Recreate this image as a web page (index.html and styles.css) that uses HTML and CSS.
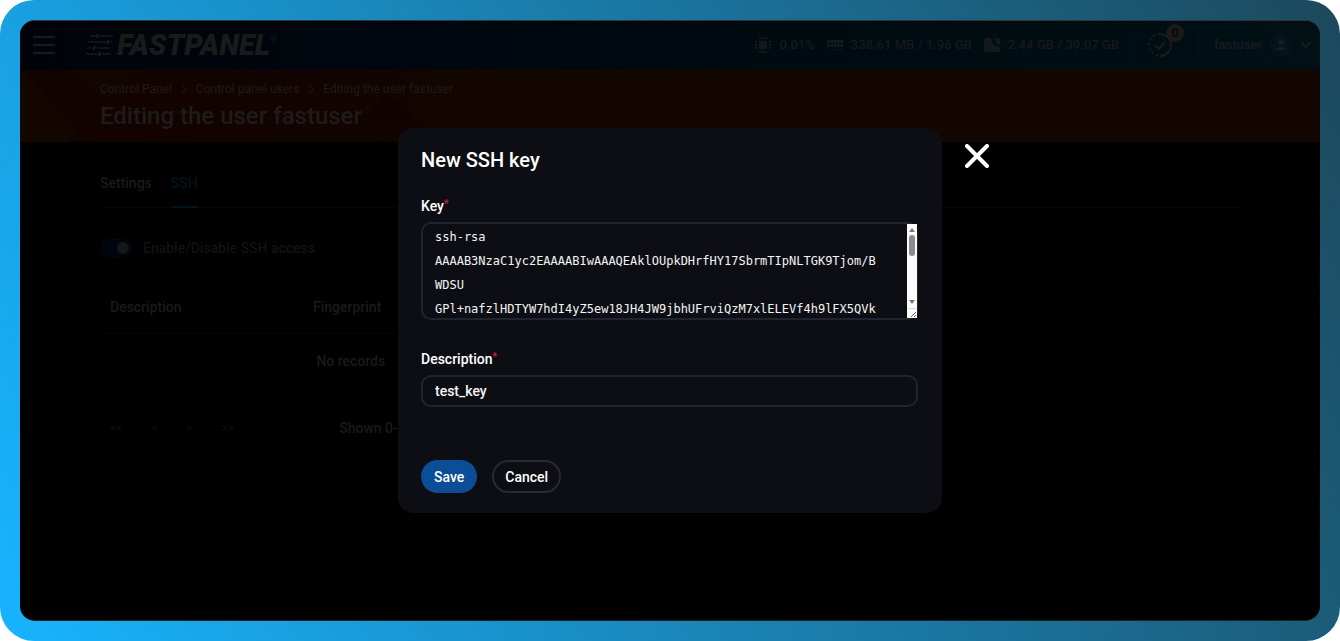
FILE: index.html
```html
<!DOCTYPE html>
<html lang="en">
<head>
<meta charset="utf-8">
<title>Editing the user fastuser</title>
<link rel="stylesheet" href="styles.css">
</head>
<body>
<div class="frame">
  <div class="app">
    <header class="topbar">
      <button class="menu" aria-label="Menu"><span></span><span></span><span></span></button>
      <a class="logo" href="#">
        <svg width="28" height="22" viewBox="0 0 28 22" fill="none" stroke="currentColor" stroke-width="1.6"><path d="M4 2h6M14 2h13M2 8h18M24 8h2M1 14h4M11 14h13M0 20h11M16 20h8"/><path stroke-width="2.500" d="M12 0l-1 4M22.500 6l-1 4M8.500 12l-1 4M14 18l-1 4"/></svg>
        <span class="brand">FASTPANEL</span><span class="reg">®</span>
      </a>
      <div class="stats">
        <span class="stat">
          <svg width="18" height="18" viewBox="0 0 18 18" fill="currentColor"><rect x="5" y="5" width="8" height="8" rx="1"/><path d="M5 1h2v2H5zM8 1h2v2H8zM11 1h2v2h-2zM5 15h2v2H5zM8 15h2v2H8zM11 15h2v2h-2zM1 5h2v2H1zM1 8h2v2H1zM1 11h2v2H1zM15 5h2v2h-2zM15 8h2v2h-2zM15 11h2v2h-2z"/></svg>
          0.01%</span>
        <span class="stat">
          <svg width="18" height="18" viewBox="0 0 18 18" fill="currentColor"><path fill-rule="evenodd" d="M2 4h14a1 1 0 0 1 1 1v6H1V5a1 1 0 0 1 1-1zM3 6v3h2V6zM7 6v3h1V6zM10 6v3h1V6zM13 6v3h2V6zM2 13h2v1H2zM6 13h2v1H6zM10 13h2v1h-2zM14 13h2v1h-2z"/></svg>
          338.61 MB / 1.96 GB</span>
        <span class="stat">
          <svg width="18" height="18" viewBox="0 0 18 18" fill="currentColor"><path fill-rule="evenodd" d="M3 2h5c0 5 3 8 9 9v3a2 2 0 0 1-2 2H3a2 2 0 0 1-2-2V4a2 2 0 0 1 2-2zM3 4v1h1V4zM3 12v1h1v-1zM14 13v1h1v-1z"/><path d="M10 2h5a2 2 0 0 1 2 2v5c-2 0-4-1-5-3l2-1-1-2-2 1z"/></svg>
          2.44 GB / 39.07 GB</span>
      </div>
      <button class="tasks" aria-label="Tasks">
        <svg width="24" height="26" viewBox="0 0 24 26" fill="none" stroke="currentColor" stroke-width="2"><path d="M12 2a11 11 0 0 1 0 22"/><path d="M12 2a11 11 0 0 0 0 22" stroke-dasharray="2 3"/><path d="M7 13l4 4 6-7"/></svg>
        <span class="badge">0</span>
      </button>
      <button class="account">fastuser
        <svg width="24" height="24" viewBox="0 0 24 24"><circle class="disc" cx="12" cy="12" r="12"/><circle cx="12" cy="9" r="3" fill="currentColor"/><path d="M6 17c0-4 12-4 12 0z" fill="currentColor"/></svg>
        <svg width="12" height="8" viewBox="0 0 12 8" fill="none" stroke="currentColor" stroke-width="2"><path d="M1 1l5 5 5-5"/></svg>
      </button>
    </header>
    <section class="hero">
      <svg class="pattern" width="440" height="72" viewBox="0 0 440 72"><path fill="#140700" d="M0 0l58 59-10 13H0z"/><path fill="#130500" d="M48 0l36 32 35-32z"/><path fill="#100200" d="M368 22l-26 26h54z"/><path fill="#120400" d="M342 48h54l15 15v9h-33l-18-20-5-4z"/></svg>
      <nav class="crumbs" aria-label="Breadcrumb">
        <a href="#">Control Panel</a>
        <svg width="6" height="8" viewBox="0 0 6 8" fill="none" stroke="currentColor"><path d="M1 0l4 4-4 4"/></svg>
        <a href="#">Control panel users</a>
        <svg width="6" height="8" viewBox="0 0 6 8" fill="none" stroke="currentColor"><path d="M1 0l4 4-4 4"/></svg>
        <span>Editing the user fastuser</span>
      </nav>
      <h1>Editing the user fastuser</h1>
    </section>
    <main class="content">
      <nav class="tabs"><a href="#">Settings</a><a class="active" href="#">SSH</a></nav>
      <label class="access"><input type="checkbox" role="switch" checked>Enable/Disable SSH access</label>
      <div class="keys">
        <table>
          <thead><tr><th class="name">Description</th><th>Fingerprint</th></tr></thead>
          <tbody><tr><td colspan="2">No records</td></tr></tbody>
        </table>
        <div class="pager">
          <div class="pages"><button>&lt;&lt;</button><button>&lt;</button><button>&gt;</button><button>&gt;&gt;</button></div>
          <span>Shown 0-0 of 0</span>
        </div>
      </div>
    </main>
    <div class="overlay">
      <form class="dialog" role="dialog" aria-labelledby="dialog-title">
        <h2 id="dialog-title">New SSH key</h2>
        <label class="field-label" for="key">Key<span class="required">*</span></label>
        <div class="keybox">
        <textarea id="key" spellcheck="false">ssh-rsa
AAAAB3NzaC1yc2EAAAABIwAAAQEAklOUpkDHrfHY17SbrmTIpNLTGK9Tjom/B
WDSU
GPl+nafzlHDTYW7hdI4yZ5ew18JH4JW9jbhUFrviQzM7xlELEVf4h9lFX5QVk</textarea>
          <svg class="scroll" width="10" height="94" viewBox="0 0 10 94" aria-hidden="true"><path fill="#fcfcfc" d="M0 0h10v94H0z"/><rect x="2" y="11" width="6" height="21" rx="3" fill="#8b8b8b"/><path fill="#777" d="M5 4l3 4H2zM5 80l3-4H2z"/><path fill="#ddd" d="M0 84h10v1H0z"/><path stroke="#666" d="M4 93l5-5M7 93l2-2"/></svg>
        </div>
        <label class="field-label" for="description">Description<span class="required">*</span></label>
        <input class="text" id="description" type="text" value="test_key">
        <div class="actions"><button class="save" type="button">Save</button><button class="cancel" type="button">Cancel</button></div>
        <button class="close" type="button" aria-label="Close"><svg width="24" height="24" viewBox="0 0 24 24" fill="none" stroke="currentColor" stroke-width="4" stroke-linecap="round"><path d="M2 2l20 20M22 2L2 22"/></svg></button>
      </form>
    </div>
  </div>
</div>
</body>
</html>
```
FILE: styles.css
```css
* { box-sizing: border-box; }
body { margin: 0; background: #fff; font-family: Roboto, sans-serif; font-size: 14px; font-weight: 500; line-height: 20px; color: #1a1a1a; }
button { padding: 0; border: 0; background: none; color: inherit; font: inherit; }
a { color: inherit; text-decoration: none; }
h1, h2 { margin: 0; font-weight: 500; }
.frame { display: flex; min-height: 100vh; padding: 20px; border-radius: 34px; background: linear-gradient(65deg, #18b4ff, #1c485b); }
.app { position: relative; flex: 1; overflow: hidden; border-top: 1px solid #333; border-bottom: 1px solid #202020; border-radius: 15px; background: #000; }

.topbar { display: flex; align-items: center; height: 49px; padding: 0 8px 1px 13px; font-size: 13px; background: linear-gradient(to right, #00030a, #000910 50%, #001015); }
.menu { display: grid; gap: 6px; width: 22px; }
.menu span { height: 2px; background: #1a1a1a; }
.logo { display: flex; align-items: center; margin-left: 31px; }
.brand { margin-left: 3px; font-size: 29px; font-weight: 900; font-style: italic; }
.reg { align-self: flex-start; font-size: 10px; line-height: 12px; }
.stats { display: flex; gap: 11px; margin-left: auto; color: #16191a; }
.stat { display: flex; align-items: center; gap: 7px; }
.tasks { position: relative; display: flex; margin-left: 14px; padding: 0 27px 0 14px; border: solid #03131a; border-width: 0 1px; }
.badge { position: absolute; top: -8px; left: 32px; width: 18px; border-radius: 10px; background: #1c1a19; color: #050505; font-size: 12px; line-height: 18px; text-align: center; }
.account { display: flex; align-items: center; gap: 7px; margin-left: 14px; color: #171c1e; }
.disc { fill: #04131b; }

.hero { position: relative; height: 72px; padding: 10px 80px 0; color: #1e1c1b; background: linear-gradient(to right, #120300, #120400 28%, #140600 36%, #140600); }
.pattern { position: absolute; top: 0; left: 0; }
.crumbs, .hero h1 { position: relative; }
.crumbs { display: flex; align-items: center; gap: 9px; font-size: 12px; font-weight: 400; line-height: 18px; }
.hero h1 { margin-top: 4px; font-size: 24px; line-height: 28px; }

.content { padding: 31px 80px 0; }
.tabs { display: flex; gap: 19px; border-bottom: 1px solid #060606; }
.tabs a { padding-bottom: 13px; margin-bottom: -1px; border-bottom: 2px solid transparent; }
.tabs .active { color: #00141e; border-color: #00141e; }
.access { display: flex; align-items: center; gap: 10px; margin-top: 30px; color: #121212; }
.access input { display: flex; align-items: center; justify-content: flex-end; appearance: none; width: 33px; height: 20px; margin: 0; padding: 4px; border-radius: 10px; background: #00040c; }
.access input::before { content: ""; width: 12px; height: 12px; border-radius: 6px; background: #161616; }
.keys { width: 44%; margin-top: 24px; }
table { width: 100%; border-collapse: collapse; }
th { padding: 15px 10px 16px; border-bottom: 1px solid #060606; font-weight: 500; text-align: left; }
.name { width: 203px; }
td { padding: 17px 10px; text-align: center; }
.pager { display: flex; justify-content: space-between; padding: 30px 168px 0 10px; white-space: nowrap; }
.pages { display: flex; gap: 29px; color: #111; font-weight: 400; font-size: 12px; }

.overlay { position: absolute; inset: 0; display: flex; justify-content: center; align-items: flex-start; padding-top: 107px; }
.dialog { position: relative; width: 544px; padding: 21px 24px 20px 23px; border-radius: 15px; background: #0d0e14; color: #fff; }
.dialog h2 { margin-bottom: 25px; font-size: 20px; line-height: 22px; }
.field-label { display: block; margin-bottom: 6px; }
.required { color: #e01b45; font-size: 10px; vertical-align: 4px; line-height: 10px; }
.keybox { display: flex; margin-bottom: 29px; border: 2px solid #1f2530; border-radius: 10px; }
textarea { flex: 1; min-width: 0; height: 94px; margin: 0; padding: 1px 0 0 12px; border: 0; outline: 0; overflow: hidden; background: transparent; color: #f4f4f4; font: 12px/24px "DejaVu Sans Mono", monospace; resize: none; }
.scroll { flex: none; margin-right: -1px; }
.text { display: block; width: 100%; height: 32px; padding: 0 12px; border: 2px solid #1f2530; border-radius: 10px; outline: 0; background: transparent; color: #f4f4f4; font: inherit; }
.actions { display: flex; gap: 15px; margin-top: 53px; }
.actions button { height: 33px; padding: 0 13px; border-radius: 17px; }
.save { background: #0b4d96; }
.actions .cancel { padding: 0 11px; border: 2px solid #252a35; }
.close { position: absolute; top: 16px; left: 100%; display: flex; margin-left: 23px; }
```
